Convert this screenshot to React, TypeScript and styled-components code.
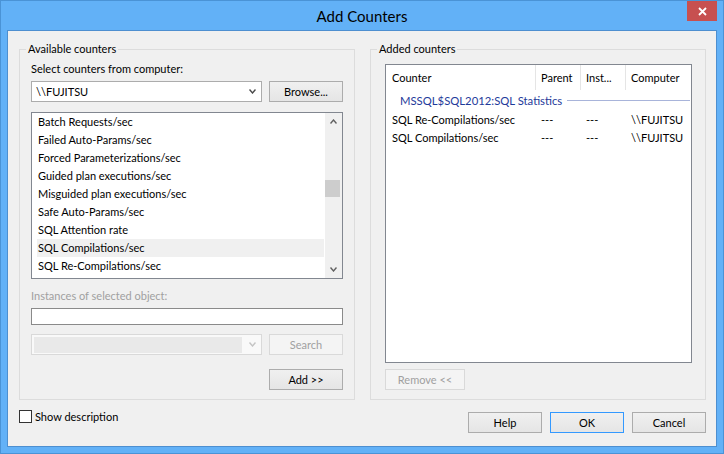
import React from "react";
import styled, { createGlobalStyle } from "styled-components";

const GlobalStyle = createGlobalStyle`
  html, body {
    margin: 0;
    padding: 0;
    background: #ffffff;
  }
  body {
    font-family: Lato, "Liberation Sans", sans-serif;
    font-size: 11px;
    color: #000000;
  }
  *, *::before, *::after {
    box-sizing: border-box;
  }
`;

const Window = styled.div`
  width: 724px;
  height: 454px;
  display: flex;
  flex-direction: column;
  padding: 0 6px 6px 6px;
  background: #62b1f7;
  border: 1px solid #4a93d6;
`;

const TitleBar = styled.div`
  height: 29px;
  display: grid;
  grid-template-columns: 1fr auto 1fr;
  align-items: center;
`;

const Title = styled.div`
  grid-column: 2;
  font-size: 15px;
  line-height: 20px;
  color: #000000;
`;

const CloseButton = styled.button`
  grid-column: 3;
  justify-self: end;
  align-self: start;
  width: 30px;
  height: 20px;
  margin: 0;
  padding: 0;
  border: none;
  background: #c75050;
  display: flex;
  align-items: center;
  justify-content: center;
`;

const Client = styled.div`
  flex: 1;
  display: flex;
  flex-direction: column;
  background: #f0f0f0;
  border: 1px solid #4d8fd0;
`;

const GroupsRow = styled.div`
  display: flex;
  gap: 15px;
  margin-top: 10px;
  padding: 0 10px 0 11px;
`;

const GroupBox = styled.fieldset`
  width: 336px;
  margin: 0;
  padding: 0;
  min-width: 0;
  border: 1px solid #dcdcdc;
`;

const Legend = styled.legend`
  margin-left: 6px;
  padding: 0 2px;
  line-height: 16px;
`;

const GroupBody = styled.div<{ $pl: number; $pr: number }>`
  display: flex;
  flex-direction: column;
  padding: 4px ${(p) => p.$pr}px 9px ${(p) => p.$pl}px;
`;

const FieldLabel = styled.div<{ $disabled?: boolean; $mt?: number }>`
  margin-top: ${(p) => p.$mt ?? 0}px;
  line-height: 16px;
  color: ${(p) => (p.$disabled ? "#a0a0a0" : "#000000")};
`;

const ControlRow = styled.div<{ $mt: number }>`
  display: flex;
  gap: 7px;
  margin-top: ${(p) => p.$mt}px;
`;

const ComboBox = styled.div<{ $disabled?: boolean }>`
  width: 231px;
  height: 21px;
  display: flex;
  align-items: center;
  justify-content: space-between;
  padding: 0 5px 0 4px;
  border: 1px solid ${(p) => (p.$disabled ? "#d9d9d9" : "#acacac")};
  background: ${(p) => (p.$disabled ? "#f9f9f9" : "#ffffff")};
`;

const DisabledField = styled.div`
  width: 208px;
  height: 16px;
  margin-left: -2px;
  background: #e9e9e9;
`;

const Button = styled.button<{ $w?: number; $default?: boolean }>`
  width: ${(p) => p.$w ?? 74}px;
  height: 21px;
  margin: 0;
  padding: 0;
  font: inherit;
  color: #000000;
  border: 1px solid ${(p) => (p.$default ? "#3399ff" : "#acacac")};
  background: linear-gradient(#f0f0f0, #e5e5e5);

  &:disabled {
    color: #a0a0a0;
    border-color: #d9d9d9;
    background: #f4f4f4;
  }
`;

const ListBox = styled.div`
  margin-top: 10px;
  height: 167px;
  display: flex;
  border: 1px solid #828790;
  background: #ffffff;
`;

const ListItems = styled.div`
  flex: 1;
  padding: 0 1px 0 5px;
`;

const ListItem = styled.div<{ $selected?: boolean }>`
  height: 18px;
  line-height: 18px;
  padding-left: 1px;
  white-space: nowrap;
  background: ${(p) => (p.$selected ? "#f0f0f0" : "transparent")};
`;

const ScrollBar = styled.div`
  width: 17px;
  display: flex;
  flex-direction: column;
  background: #f0f0f0;
`;

const ScrollArrow = styled.div`
  height: 17px;
  display: flex;
  align-items: center;
  justify-content: center;
`;

const ScrollTrack = styled.div`
  flex: 1;
`;

const ScrollThumb = styled.div<{ $top: number }>`
  width: 15px;
  height: 17px;
  margin-top: ${(p) => p.$top}px;
  background: #cdcdcd;
`;

const TextBox = styled.input`
  margin-top: 4px;
  height: 17px;
  width: 100%;
  padding: 0 3px;
  font: inherit;
  border: 1px solid #8a8a8a;
  background: #ffffff;
  outline: none;
`;

const ActionRow = styled.div<{ $mt: number; $align: "start" | "end" }>`
  display: flex;
  justify-content: ${(p) => (p.$align === "end" ? "flex-end" : "flex-start")};
  margin-top: ${(p) => p.$mt}px;
`;

const CounterTable = styled.div`
  margin-top: 3px;
  height: 299px;
  border: 1px solid #828790;
  background: #ffffff;
`;

const TableRow = styled.div<{ $header?: boolean }>`
  display: grid;
  grid-template-columns: 150px 45px 45px 1fr;
  height: ${(p) => (p.$header ? 25 : 18)}px;
  line-height: ${(p) => (p.$header ? 25 : 18)}px;
`;

const Cell = styled.div<{ $header?: boolean }>`
  padding-left: 5px;
  white-space: nowrap;
  overflow: hidden;
  border-right: 1px solid ${(p) => (p.$header ? "#e5e5e5" : "transparent")};

  &:first-child {
    padding-left: 6px;
  }
  &:last-child {
    border-right: none;
  }
`;

const GroupHeader = styled.div`
  height: 21px;
  display: flex;
  align-items: center;
  gap: 5px;
  padding: 0 1px 0 14px;
`;

const GroupName = styled.span`
  color: #1e3a9a;
  font-size: 11.3px;
  white-space: nowrap;
`;

const GroupRule = styled.div`
  flex: 1;
  height: 1px;
  background: #a8b4da;
`;

const BottomRow = styled.div`
  display: flex;
  justify-content: space-between;
  align-items: flex-start;
  padding: 0 10px 0 11px;
`;

const CheckRow = styled.label`
  margin-top: 10px;
  display: flex;
  align-items: center;
  gap: 3px;
  line-height: 13px;
`;

const CheckBox = styled.span`
  width: 13px;
  height: 13px;
  border: 1px solid #333333;
  background: #ffffff;
`;

const DialogButtons = styled.div`
  margin-top: 12px;
  display: flex;
  gap: 8px;
`;

const Chevron: React.FC<{ up?: boolean; color: string }> = ({ up, color }) => (
  <svg width="7" height="5" viewBox="0 0 7 5">
    <polyline
      points={up ? "0.5,4.5 3.5,1 6.5,4.5" : "0.5,0.5 3.5,4 6.5,0.5"}
      fill="none"
      stroke={color}
      strokeWidth="1.4"
    />
  </svg>
);

const availableCounters = [
  "Batch Requests/sec",
  "Failed Auto-Params/sec",
  "Forced Parameterizations/sec",
  "Guided plan executions/sec",
  "Misguided plan executions/sec",
  "Safe Auto-Params/sec",
  "SQL Attention rate",
  "SQL Compilations/sec",
  "SQL Re-Compilations/sec",
];

const addedCounters = ["SQL Re-Compilations/sec", "SQL Compilations/sec"];

const App: React.FC = () => {
  return (
    <>
      <GlobalStyle />
      <Window>
        <TitleBar>
          <Title>Add Counters</Title>
          <CloseButton>
            <svg width="9" height="9" viewBox="0 0 9 9">
              <path d="M1 1 L8 8 M8 1 L1 8" stroke="#ffffff" strokeWidth="1.8" />
            </svg>
          </CloseButton>
        </TitleBar>

        <Client>
          <GroupsRow>
            <GroupBox>
              <Legend>Available counters</Legend>
              <GroupBody $pl={11} $pr={11}>
                <FieldLabel>Select counters from computer:</FieldLabel>
                <ControlRow $mt={4}>
                  <ComboBox>
                    <span>{"\\\\FUJITSU"}</span>
                    <Chevron color="#4a4a4a" />
                  </ComboBox>
                  <Button>Browse...</Button>
                </ControlRow>

                <ListBox>
                  <ListItems>
                    {availableCounters.map((name) => (
                      <ListItem key={name} $selected={name === "SQL Compilations/sec"}>
                        {name}
                      </ListItem>
                    ))}
                  </ListItems>
                  <ScrollBar>
                    <ScrollArrow>
                      <Chevron up color="#606060" />
                    </ScrollArrow>
                    <ScrollTrack>
                      <ScrollThumb $top={50} />
                    </ScrollTrack>
                    <ScrollArrow>
                      <Chevron color="#606060" />
                    </ScrollArrow>
                  </ScrollBar>
                </ListBox>

                <FieldLabel $disabled $mt={9}>
                  Instances of selected object:
                </FieldLabel>
                <TextBox type="text" />
                <ControlRow $mt={9}>
                  <ComboBox $disabled>
                    <DisabledField />
                    <Chevron color="#c4c4c4" />
                  </ComboBox>
                  <Button disabled>Search</Button>
                </ControlRow>
                <ActionRow $mt={14} $align="end">
                  <Button>Add &gt;&gt;</Button>
                </ActionRow>
              </GroupBody>
            </GroupBox>

            <GroupBox>
              <Legend>Added counters</Legend>
              <GroupBody $pl={14} $pr={13}>
                <CounterTable>
                  <TableRow $header>
                    <Cell $header>Counter</Cell>
                    <Cell $header>Parent</Cell>
                    <Cell $header>Inst...</Cell>
                    <Cell $header>Computer</Cell>
                  </TableRow>
                  <GroupHeader>
                    <GroupName>MSSQL$SQL2012:SQL Statistics</GroupName>
                    <GroupRule />
                  </GroupHeader>
                  {addedCounters.map((name) => (
                    <TableRow key={name}>
                      <Cell>{name}</Cell>
                      <Cell>---</Cell>
                      <Cell>---</Cell>
                      <Cell>{"\\\\FUJITSU"}</Cell>
                    </TableRow>
                  ))}
                </CounterTable>
                <ActionRow $mt={6} $align="start">
                  <Button disabled $w={80}>
                    Remove &lt;&lt;
                  </Button>
                </ActionRow>
              </GroupBody>
            </GroupBox>
          </GroupsRow>

          <BottomRow>
            <CheckRow>
              <CheckBox />
              <span>Show description</span>
            </CheckRow>
            <DialogButtons>
              <Button>Help</Button>
              <Button $default>OK</Button>
              <Button>Cancel</Button>
            </DialogButtons>
          </BottomRow>
        </Client>
      </Window>
    </>
  );
};

export default App;
